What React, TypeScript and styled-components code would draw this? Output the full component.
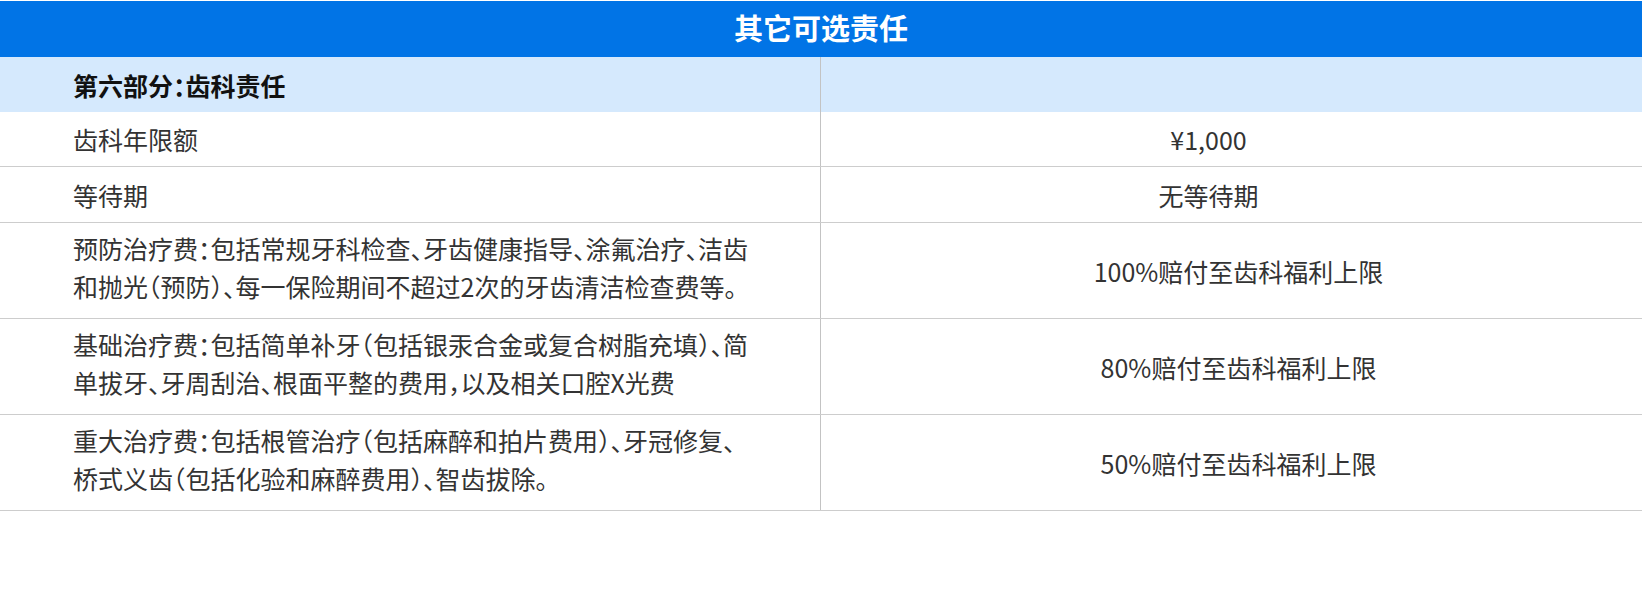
import React from "react";
import styled, { createGlobalStyle } from "styled-components";

const GlobalStyle = createGlobalStyle`
  html, body {
    margin: 0;
    padding: 0;
    background: #ffffff;
  }
  body {
    font-family: "Noto Sans CJK SC", "Noto Sans", sans-serif;
    color: #333333;
  }
`;

const Table = styled.section`
  width: 1642px;
  padding-top: 1px;
  font-feature-settings: "halt";
`;

const Title = styled.h2`
  margin: 0;
  height: 56px;
  display: flex;
  align-items: center;
  justify-content: center;
  background: #0174e6;
  color: #ffffff;
  font-size: 29px;
  font-weight: 700;
  padding-bottom: 4px;
  box-sizing: border-box;
`;

const Row = styled.div<{ $h: number; $section?: boolean }>`
  display: grid;
  grid-template-columns: 821px 1fr;
  min-height: ${(p) => p.$h}px;
  background: ${(p) => (p.$section ? "#d5e9fd" : "#ffffff")};
  border-bottom: ${(p) => (p.$section ? "none" : "1px solid #cdcdcd")};
`;

const LeftCell = styled.div<{ $bold?: boolean; $multi?: boolean }>`
  display: flex;
  align-items: center;
  padding: 0 40px ${(p) => (p.$multi ? 8 : 0)}px 73px;
  border-right: 1px solid #c3c3c3;
  font-size: 25px;
  line-height: 38px;
  font-weight: ${(p) => (p.$bold ? 700 : 400)};
  color: ${(p) => (p.$bold ? "#111111" : "#333333")};
`;

const RightCell = styled.div<{ $shift?: number }>`
  display: flex;
  align-items: center;
  justify-content: center;
  font-size: 25px;
  line-height: 38px;
  color: #333333;
  padding-left: ${(p) => Math.max(0, (p.$shift ?? 0) * 2)}px;
  padding-right: ${(p) => Math.max(0, -(p.$shift ?? 0) * 2)}px;
`;

type Item = { left: React.ReactNode; right: string; h: number; shift: number; multi?: boolean };

const items: Item[] = [
  { left: "齿科年限额", right: "¥1,000", h: 54, shift: -23 },
  { left: "等待期", right: "无等待期", h: 55, shift: -23 },
  {
    left: (
      <>
        预防治疗费：包括常规牙科检查、牙齿健康指导、涂氟治疗、洁齿
        <br />
        和抛光（预防）、每一保险期间不超过2次的牙齿清洁检查费等。
      </>
    ),
    right: "100%赔付至齿科福利上限",
    h: 95,
    shift: 7,
    multi: true,
  },
  {
    left: (
      <>
        基础治疗费：包括简单补牙（包括银汞合金或复合树脂充填）、简
        <br />
        单拔牙、牙周刮治、根面平整的费用，以及相关口腔X光费
      </>
    ),
    right: "80%赔付至齿科福利上限",
    h: 95,
    shift: 7,
    multi: true,
  },
  {
    left: (
      <>
        重大治疗费：包括根管治疗（包括麻醉和拍片费用）、牙冠修复、
        <br />
        桥式义齿（包括化验和麻醉费用）、智齿拔除。
      </>
    ),
    right: "50%赔付至齿科福利上限",
    h: 95,
    shift: 7,
    multi: true,
  },
];

export default function App() {
  return (
    <>
      <GlobalStyle />
      <Table>
        <Title>其它可选责任</Title>
        <Row $h={55} $section>
          <LeftCell $bold>第六部分：齿科责任</LeftCell>
          <RightCell />
        </Row>
        {items.map((it, i) => (
          <Row key={i} $h={it.h}>
            <LeftCell $multi={it.multi}>{it.left}</LeftCell>
            <RightCell $shift={it.shift}>{it.right}</RightCell>
          </Row>
        ))}
      </Table>
    </>
  );
}
